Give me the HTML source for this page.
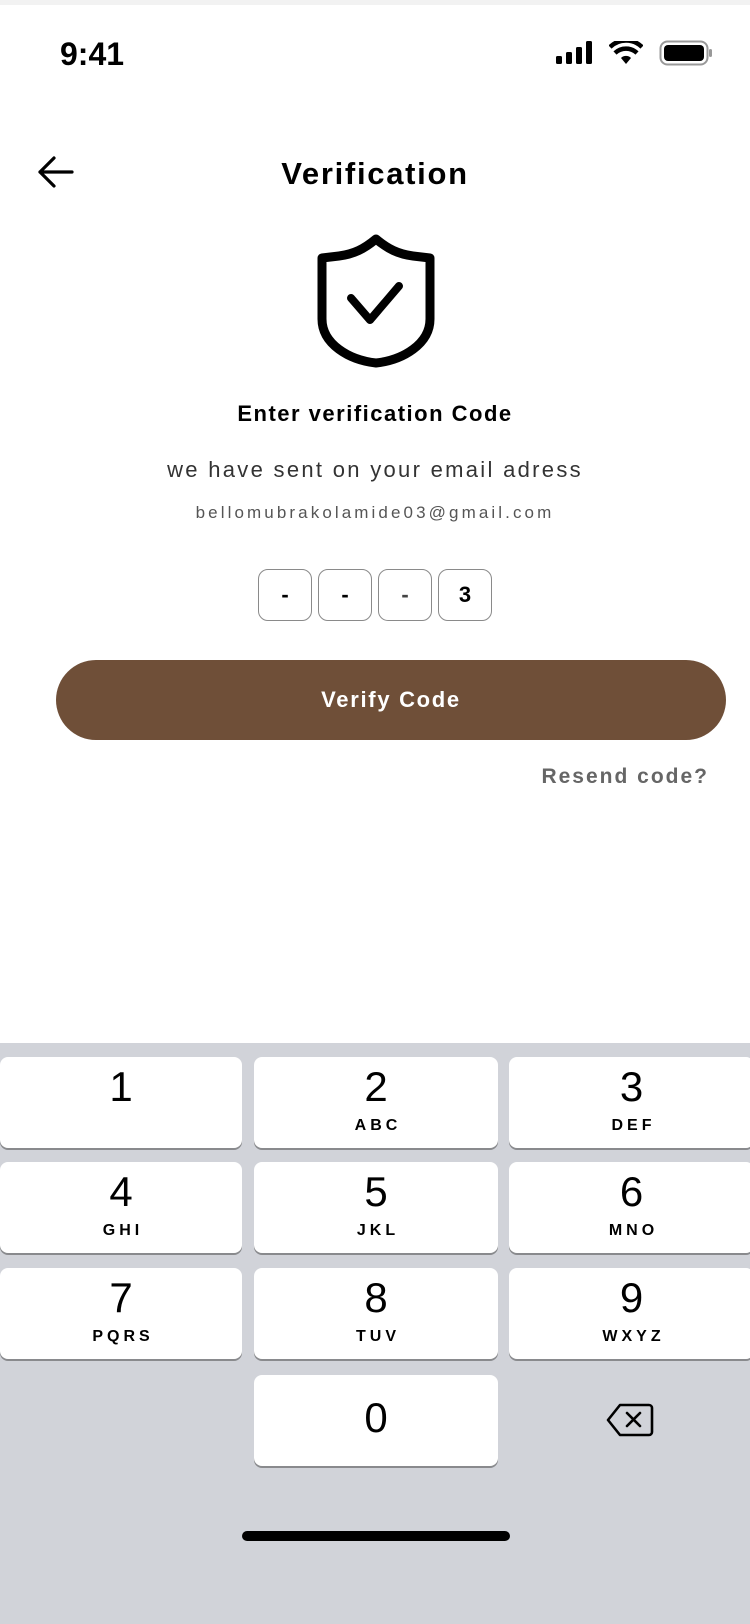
<!DOCTYPE html>
<html><head><meta charset="utf-8"><style>
*{margin:0;padding:0;box-sizing:border-box}
body{width:750px;height:1624px;background:#fff;position:relative;overflow:hidden;font-family:"Liberation Sans",sans-serif;color:#000}
.a{position:absolute}
.c{position:absolute;left:0;width:750px;text-align:center}
.box{position:absolute;top:569px;width:54px;height:52px;border:1px solid #8a8a8a;border-radius:10px;text-align:center;line-height:50px;font-weight:bold;font-size:22px}
.kb{position:absolute;left:0;top:1043px;width:750px;height:581px;background:#d1d3d9}
.k{position:absolute;height:91px;background:#fff;border-radius:8px;box-shadow:0 2px 0 #898a8d;text-align:center}
.k .n{font-size:42px;line-height:42px;margin-top:9px;display:block}
.k .l{font-size:16px;font-weight:bold;letter-spacing:4px;display:block;margin-top:9px;padding-left:4px}
</style></head><body>
<div class="a" style="left:0;top:0;width:750px;height:5px;background:#f2f2f2"></div>
<div class="a" style="left:60px;top:36px;font-size:32px;font-weight:bold">9:41</div>
<svg class="a" style="left:555px;top:41px" width="40" height="24"><rect x="1" y="15" width="6" height="8" rx="1.5"/><rect x="11" y="11" width="6" height="12" rx="1.5"/><rect x="21" y="6" width="6" height="17" rx="1.5"/><rect x="31" y="0" width="6" height="23" rx="1.5"/></svg>
<svg class="a" style="left:609px;top:41px" width="34" height="24" viewBox="0 0 34 24"><path d="M17 23 L12 17 A7 7 0 0 1 22 17 Z"/><path d="M6 12 A16 16 0 0 1 28 12" stroke="#000" stroke-width="4.5" fill="none"/><path d="M1 6 A23 23 0 0 1 33 6" stroke="#000" stroke-width="4.5" fill="none"/></svg>
<svg class="a" style="left:659px;top:40px" width="54" height="26"><rect x="1.5" y="1.5" width="47" height="23" rx="7" fill="none" stroke="#999" stroke-width="2"/><rect x="5" y="5" width="40" height="16" rx="4"/><rect x="50" y="9" width="3" height="8" rx="1.5" fill="#999"/></svg>
<svg class="a" style="left:36px;top:155px" width="40" height="34" viewBox="0 0 40 34"><path d="M36 17H4M18 3L4 17l14 14" stroke="#000" stroke-width="3.2" fill="none" stroke-linecap="round" stroke-linejoin="round"/></svg>
<div class="c" style="top:156px;font-size:31px;font-weight:bold;letter-spacing:1.7px">Verification</div>
<svg class="a" style="left:314px;top:234px" width="124" height="134" viewBox="0 0 124 134"><path d="M62 5 C50 15 40 20 25 22 L8 24 V85 C8 110 35 126 62 129 C89 126 116 110 116 85 V24 L99 22 C84 20 74 15 62 5 Z" fill="none" stroke="#000" stroke-width="9" stroke-linejoin="round"/><path d="M37 64 L56 86 L85 52" fill="none" stroke="#000" stroke-width="8" stroke-linecap="round" stroke-linejoin="round"/></svg>
<div class="c" style="top:401px;font-size:22px;font-weight:bold;letter-spacing:1.5px">Enter verification Code</div>
<div class="c" style="top:457px;font-size:22px;color:#333;letter-spacing:2.3px">we have sent on your email adress</div>
<div class="c" style="top:503px;font-size:17px;color:#555;letter-spacing:3.1px">bellomubrakolamide03@gmail.com</div>
<div class="box" style="left:258px">-</div>
<div class="box" style="left:318px">-</div>
<div class="box" style="left:378px;color:#444">-</div>
<div class="box" style="left:438px">3</div>
<div class="a" style="left:56px;top:660px;width:670px;height:80px;border-radius:40px;background:#6f4f38;color:#fff;text-align:center;line-height:80px;font-size:22px;font-weight:bold;letter-spacing:1.7px">Verify Code</div>
<div class="a" style="right:41px;top:765px;font-size:21px;font-weight:bold;color:#666;letter-spacing:2px">Resend code?</div>
<div class="kb">
<div class="k" style="left:0;top:14px;width:242px"><span class="n">1</span></div>
<div class="k" style="left:254px;top:14px;width:244px"><span class="n">2</span><span class="l">ABC</span></div>
<div class="k" style="left:509px;top:14px;width:245px"><span class="n">3</span><span class="l">DEF</span></div>
<div class="k" style="left:0;top:119px;width:242px"><span class="n">4</span><span class="l">GHI</span></div>
<div class="k" style="left:254px;top:119px;width:244px"><span class="n">5</span><span class="l">JKL</span></div>
<div class="k" style="left:509px;top:119px;width:245px"><span class="n">6</span><span class="l">MNO</span></div>
<div class="k" style="left:0;top:225px;width:242px"><span class="n">7</span><span class="l">PQRS</span></div>
<div class="k" style="left:254px;top:225px;width:244px"><span class="n">8</span><span class="l">TUV</span></div>
<div class="k" style="left:509px;top:225px;width:245px"><span class="n">9</span><span class="l">WXYZ</span></div>
<div class="k" style="left:254px;top:332px;width:244px"><span class="n" style="margin-top:22px">0</span></div>
<svg class="a" style="left:606px;top:360px" width="48" height="34" viewBox="0 0 48 34"><path d="M14 2 H43 a3 3 0 0 1 3 3 V29 a3 3 0 0 1 -3 3 H14 L2 17 Z" fill="none" stroke="#000" stroke-width="2.6" stroke-linejoin="round"/><path d="M21 10 L34 23 M34 10 L21 23" stroke="#000" stroke-width="2.6" stroke-linecap="round"/></svg>
<div class="a" style="left:242px;top:488px;width:268px;height:10px;border-radius:5px;background:#000"></div>
</div>
</body></html>
